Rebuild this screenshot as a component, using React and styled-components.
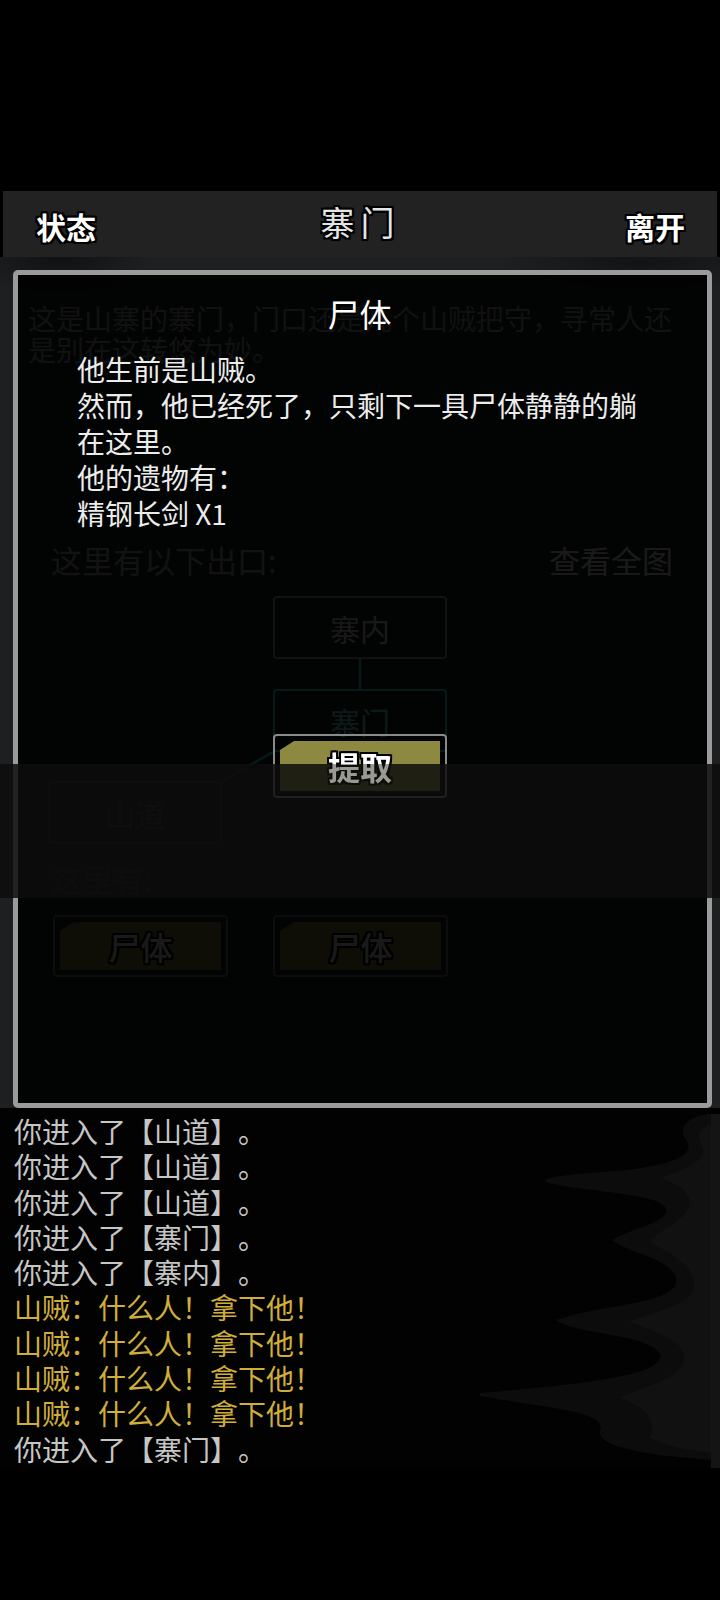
import styled, { createGlobalStyle } from "styled-components";

const GlobalStyle = createGlobalStyle`
  html, body {
    margin: 0;
    padding: 0;
    background: #000;
  }
  body {
    font-family: "Noto Sans CJK SC", "Noto Sans", sans-serif;
    text-spacing-trim: space-all;
  }
`;

const outline = (w, c) => `
  ${-w}px 0 0 ${c}, ${w}px 0 0 ${c}, 0 ${-w}px 0 ${c}, 0 ${w}px 0 ${c},
  ${-w}px ${-w}px 0 ${c}, ${w}px ${-w}px 0 ${c}, ${-w}px ${w}px 0 ${c}, ${w}px ${w}px 0 ${c}
`;

const logLines = [
  { text: "你进入了【山道】。", tone: "plain" },
  { text: "你进入了【山道】。", tone: "plain" },
  { text: "你进入了【山道】。", tone: "plain" },
  { text: "你进入了【寨门】。", tone: "plain" },
  { text: "你进入了【寨内】。", tone: "plain" },
  { text: "山贼：什么人！拿下他！", tone: "npc" },
  { text: "山贼：什么人！拿下他！", tone: "npc" },
  { text: "山贼：什么人！拿下他！", tone: "npc" },
  { text: "山贼：什么人！拿下他！", tone: "npc" },
  { text: "你进入了【寨门】。", tone: "plain" },
];

const rooms = [
  { name: "寨内", x: 273, y: 18, current: false },
  { name: "寨门", x: 273, y: 111, current: true },
  { name: "山道", x: 48, y: 203, current: false },
];

export default function App() {
  return (
    <Screen>
      <GlobalStyle />
      <TopGap />
      <Header>
        <HeaderButton>状态</HeaderButton>
        <HeaderTitle>寨门</HeaderTitle>
        <HeaderButton>离开</HeaderButton>
      </Header>

      <Scene>
        <Description>
          这是山寨的寨门，门口还是几个山贼把守，寻常人还是别在这转悠为妙。
        </Description>

        <ExitsRow>
          <span>这里有以下出口:</span>
          <MapLink>查看全图</MapLink>
        </ExitsRow>

        <MapCanvas>
          <MapLines viewBox="0 0 720 285" aria-hidden="true">
            <line x1="360" y1="81" x2="360" y2="111" />
            <polyline points="273,174 222,203" />
          </MapLines>
          {rooms.map((r) => (
            <MapNode key={r.name} $x={r.x} $y={r.y} $current={r.current}>
              {r.name}
            </MapNode>
          ))}
        </MapCanvas>

        <HereLabel>这里有:</HereLabel>
        <ItemRow>
          <ItemButton>
            <ItemFill>尸体</ItemFill>
          </ItemButton>
          <ItemButton>
            <ItemFill>尸体</ItemFill>
          </ItemButton>
        </ItemRow>

        <Modal>
          <ModalTitle>尸体</ModalTitle>
          <ModalBody>
            <div>他生前是山贼。</div>
            <div>然而，他已经死了，只剩下一具尸体静静的躺在这里。</div>
            <div>他的遗物有：</div>
            <div>精钢长剑 X1</div>
          </ModalBody>
          <TakeButton>
            <ItemFill />
            <TakeLabel>提取</TakeLabel>
          </TakeButton>
        </Modal>
      </Scene>

      <Log>
        <Smoke viewBox="0 0 240 360" aria-hidden="true">
          <path
            fill="#0c0c0c"
            d="M240,6 L232,6 C212,6 196,18 206,32 C218,48 186,58 146,62 C100,66 60,68 66,74 C100,84 170,84 184,98 C196,114 150,120 132,132 C150,146 190,150 196,170 C202,196 120,196 76,212 C92,226 170,226 180,246 C186,268 100,276 -10,286 C60,300 128,302 120,322 C116,336 150,346 232,352 L240,352 Z"
          />
          <path
            fill="#111"
            d="M240,14 C222,16 214,26 222,38 C230,52 200,64 180,70 C210,80 214,92 206,104 C198,116 176,124 170,134 C190,146 214,156 214,178 C214,198 170,204 150,214 C178,226 206,232 204,252 C202,270 160,280 140,290 C170,300 176,316 170,330 C190,340 220,344 240,346 Z"
          />
          <rect x="231" y="6" width="9" height="354" fill="#141414" />
        </Smoke>
        {logLines.map((l, i) => (
          <LogLine key={i} $tone={l.tone}>
            {l.text}
          </LogLine>
        ))}
      </Log>

      <DimBand />
    </Screen>
  );
}

const Screen = styled.div`
  position: relative;
  width: 720px;
  height: 1600px;
  background: #000;
  overflow: hidden;
`;

const TopGap = styled.div`
  height: 191px;
`;

const Header = styled.div`
  height: 66px;
  margin: 0 3px;
  padding: 0 32px 0 33px;
  box-sizing: border-box;
  background: #222222;
  display: flex;
  align-items: center;
  justify-content: space-between;
`;

const HeaderButton = styled.span`
  font-size: 30px;
  font-weight: 700;
  color: #fff;
  line-height: 1;
  padding-top: 4px;
  text-shadow: ${outline(2, "#000")};
`;

const HeaderTitle = styled.span`
  font-size: 34px;
  font-weight: 400;
  color: #e4e4e4;
  letter-spacing: 6px;
  line-height: 1;
  margin-top: -4px;
  text-shadow: ${outline(2, "#000")};
`;

const Scene = styled.div`
  position: relative;
  height: 851px;
  padding-top: 46px;
  box-sizing: border-box;
  background: radial-gradient(ellipse 90px 40px at 60px 0px, #101112, transparent),
    radial-gradient(ellipse 140px 30px at 640px 4px, #121314, transparent), #1d1f21;
`;

const Description = styled.div`
  padding: 0 28px;
  font-size: 28px;
  line-height: 31px;
  color: #aaa;
`;

const ExitsRow = styled.div`
  margin-top: 177px;
  padding: 0 47px 0 51px;
  display: flex;
  justify-content: space-between;
  font-size: 31px;
  line-height: 36px;
  color: #bbb;
`;

const MapLink = styled.span`
  color: #fff;
`;

const MapCanvas = styled.div`
  position: relative;
  height: 283px;
`;

const MapLines = styled.svg`
  position: absolute;
  inset: 0;
  width: 720px;
  height: 285px;
  stroke: #4ff;
  stroke-width: 2.5;
  fill: none;
`;

const MapNode = styled.div`
  position: absolute;
  left: ${(p) => p.$x}px;
  top: ${(p) => p.$y}px;
  width: 174px;
  height: 63px;
  box-sizing: border-box;
  border: 2px solid ${(p) => (p.$current ? "#5ff" : "#aaa")};
  border-radius: 4px;
  display: flex;
  align-items: center;
  justify-content: center;
  font-size: 30px;
  color: ${(p) => (p.$current ? "#8ff" : "#eee")};
`;

const HereLabel = styled.div`
  padding-left: 51px;
  font-size: 31px;
  line-height: 36px;
  color: #bbb;
`;

const ItemRow = styled.div`
  margin-top: 18px;
  padding-left: 53px;
  display: flex;
  gap: 45px;
`;

const ItemButton = styled.div`
  position: relative;
  width: 175px;
  height: 62px;
  box-sizing: border-box;
  padding: 5px;
  border: 2px solid #7a7a7a;
  border-radius: 4px;
  display: flex;
`;

const ItemFill = styled.div`
  flex: 1;
  background: #8d8941;
  clip-path: polygon(14px 0, 100% 0, 100% 100%, 0 100%, 0 9px);
  display: flex;
  align-items: center;
  justify-content: center;
  font-size: 32px;
  font-weight: 500;
  color: #fff;
  text-shadow: ${outline(2, "#000")};
`;

const Modal = styled.div`
  position: absolute;
  top: 13px;
  left: 13px;
  width: 699px;
  height: 838px;
  box-sizing: border-box;
  border: 5px solid #9b9b9b;
  border-radius: 5px;
  background: rgba(0, 0, 0, 0.9);
  display: flex;
  flex-direction: column;
`;

const ModalTitle = styled.div`
  padding-top: 19px;
  text-align: center;
  font-size: 32px;
  font-weight: 400;
  line-height: 38px;
  color: #fff;
  margin-left: -6px;
`;

const ModalBody = styled.div`
  margin-top: 19px;
  padding-left: 59px;
  width: 570px;
  font-size: 28px;
  line-height: 36px;
  color: #ececec;
`;

const TakeButton = styled(ItemButton)`
  margin-top: 203px;
  margin-left: 255px;
  width: 174px;
  height: 64px;
  border-color: #8a8a8a;
`;

/* the label sits above the dim band; its lower part stays half lit */
const TakeLabel = styled.div`
  position: absolute;
  inset: 0;
  z-index: 6;
  display: flex;
  align-items: center;
  justify-content: center;
  font-size: 32px;
  font-weight: 700;
  color: #fff;
  text-shadow: ${outline(2, "#000")};
  -webkit-mask-image: linear-gradient(#000 0 28px, rgba(0, 0, 0, 0.55) 28px);
  mask-image: linear-gradient(#000 0 28px, rgba(0, 0, 0, 0.55) 28px);
`;

const Log = styled.div`
  position: relative;
  height: 360px;
  padding: 6px 14px 0;
  box-sizing: border-box;
  background: #020202;
  overflow: hidden;
`;

const Smoke = styled.svg`
  position: absolute;
  right: 0;
  top: 0;
  width: 240px;
  height: 360px;
`;

const LogLine = styled.div`
  position: relative;
  font-size: 28px;
  line-height: 35.3px;
  white-space: nowrap;
  color: ${(p) => (p.$tone === "npc" ? "#d0ae3a" : "#c6c6c6")};
`;

const DimBand = styled.div`
  position: absolute;
  top: 764px;
  left: 0;
  right: 0;
  height: 134px;
  background: rgba(13, 13, 13, 0.85);
  z-index: 5;
`;
